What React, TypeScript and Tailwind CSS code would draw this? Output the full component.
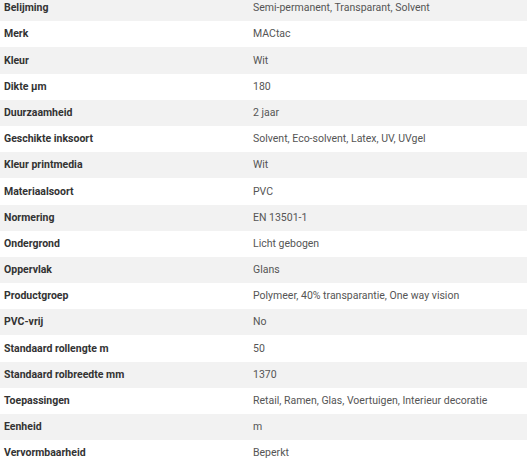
import React from "react";

const rows: [string, string][] = [
  ["Belijming", "Semi-permanent, Transparant, Solvent"],
  ["Merk", "MACtac"],
  ["Kleur", "Wit"],
  ["Dikte µm", "180"],
  ["Duurzaamheid", "2 jaar"],
  ["Geschikte inksoort", "Solvent, Eco-solvent, Latex, UV, UVgel"],
  ["Kleur printmedia", "Wit"],
  ["Materiaalsoort", "PVC"],
  ["Normering", "EN 13501-1"],
  ["Ondergrond", "Licht gebogen"],
  ["Oppervlak", "Glans"],
  ["Productgroep", "Polymeer, 40% transparantie, One way vision"],
  ["PVC-vrij", "No"],
  ["Standaard rollengte m", "50"],
  ["Standaard rolbreedte mm", "1370"],
  ["Toepassingen", "Retail, Ramen, Glas, Voertuigen, Interieur decoratie"],
  ["Eenheid", "m"],
  ["Vervormbaarheid", "Beperkt"],
];

export default function App() {
  return (
    <div className="w-[528px] h-[465px] overflow-hidden bg-white" style={{ fontFamily: "Roboto, sans-serif" }}>
      <div className="mt-[-5px] w-[527px]">
        {rows.map(([k, v], i) => (
          <div
            key={k}
            className={`grid grid-cols-[249px_1fr] items-center h-[26.2px] text-[10.5px] ${i % 2 === 0 ? "bg-[#f2f2f2]" : "bg-white"}`}
          >
            <div className="pl-[4px] font-bold text-[#333]">{k}</div>
            <div className="pl-[4px] text-[#555]">{v}</div>
          </div>
        ))}
      </div>
    </div>
  );
}
